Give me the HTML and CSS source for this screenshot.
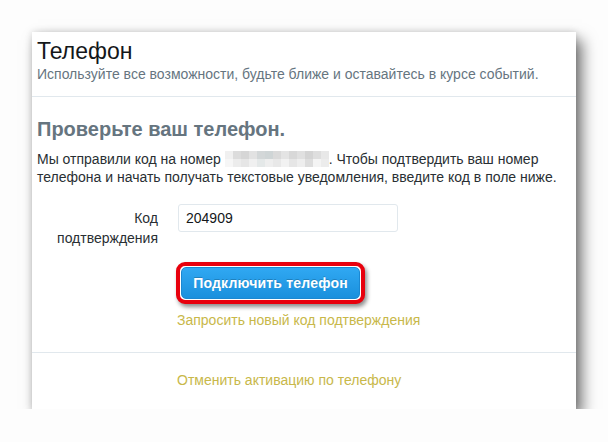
FILE: index.html
```html
<!DOCTYPE html>
<html lang="ru">
<head>
<meta charset="utf-8">
<title>Телефон</title>
<link rel="stylesheet" href="styles.css">
</head>
<body>
<div class="card">
  <div class="card-header">
    <h2 class="title">Телефон</h2>
    <p class="subtitle">Используйте все возможности, будьте ближе и оставайтесь в курсе событий.</p>
  </div>
  <div class="card-body">
    <h3 class="heading">Проверьте ваш телефон.</h3>
    <p class="text">Мы отправили код на номер <span class="blur"></span>. Чтобы подтвердить ваш номер<br>телефона и начать получать текстовые уведомления, введите код в поле ниже.</p>
    <div class="form-row">
      <label class="label" for="code">Код<br>подтверждения</label>
      <input class="input" id="code" type="text" value="204909">
    </div>
    <div class="actions">
      <div class="highlight">
        <button class="btn" type="button">Подключить телефон</button>
      </div>
      <a class="link" href="#">Запросить новый код подтверждения</a>
    </div>
  </div>
  <div class="card-footer">
    <a class="link" href="#">Отменить активацию по телефону</a>
  </div>
</div>
</body>
</html>
```
FILE: styles.css
```css
* { box-sizing: border-box; }
html, body { margin: 0; padding: 0; }
body {
  background: #fdfdfd;
  font-family: "Liberation Sans", Arial, sans-serif;
  color: #292f33;
  padding: 32px 0 0 32px;
}
.card {
  width: 544px;
  background: #fff;
  box-shadow: 6px 8px 14px rgba(0,0,0,0.55), 0 0 7px rgba(0,0,0,0.14);
}
.card-header {
  padding: 5px 5px 13px;
  border-bottom: 1px solid #e1e8ed;
}
.title {
  margin: 0;
  font-size: 23px;
  line-height: 28px;
  font-weight: normal;
  color: #14171a;
}
.subtitle {
  margin: 0;
  font-size: 14px;
  line-height: 18px;
  color: #66757f;
}
.card-body {
  padding: 20px 5px 23px;
  border-bottom: 1px solid #e1e8ed;
}
.heading {
  margin: 0;
  font-size: 20px;
  line-height: 24px;
  font-weight: bold;
  color: #66757f;
}
.text {
  margin: 9px 0 0;
  font-size: 14px;
  line-height: 18px;
  color: #292f33;
}
.blur {
  display: inline-block;
  width: 104px;
  height: 16px;
  vertical-align: -3px;
  background:
    linear-gradient(to right, #f0f0f0 0 8px, #dcdcdc 8px 16px, #d6d6d6 16px 24px, #e2e2e2 24px 32px, #d3d7d8 32px 40px, #cfd5d6 40px 48px, #dadada 48px 56px, #e4e4e4 56px 64px, #d8d8d8 64px 72px, #e0e0e0 72px 80px, #d4d4d4 80px 88px, #dedede 88px 96px, #e8e8e8 96px 104px) top / 100% 8px no-repeat,
    linear-gradient(to right, #f6f6f6 0 8px, #ececec 8px 16px, #e6e6e6 16px 24px, #f0f0f0 24px 32px, #e4e8e8 32px 40px, #eeeeee 40px 48px, #e8e8e8 48px 56px, #f2f2f2 56px 64px, #e6e6e6 64px 72px, #eeeeee 72px 80px, #dddddd 80px 88px, #f4f4f4 88px 96px, #ececec 96px 104px) bottom / 100% 8px no-repeat;
}
.form-row {
  display: flex;
  gap: 20px;
  margin-top: 18px;
}
.label {
  width: 121px;
  text-align: right;
  font-size: 14px;
  line-height: 20px;
  padding-top: 4px;
  color: #292f33;
}
.input {
  width: 220px;
  height: 28px;
  border: 1px solid #e1e8ed;
  border-radius: 3px;
  padding: 0 7px;
  font-family: inherit;
  font-size: 14px;
  color: #14171a;
  background: #fff;
  outline: none;
}
.actions {
  display: flex;
  flex-direction: column;
  align-items: flex-start;
  padding-left: 140px;
  margin-top: 14px;
}
.highlight {
  margin-left: -1px;
  border: 4px solid #e8000d;
  border-radius: 9px;
  padding: 1px;
  background: #fff;
  box-shadow: 2px 3px 4px rgba(0,0,0,0.45);
}
.btn {
  display: block;
  width: 179px;
  height: 32px;
  border: 1px solid #1b88d2;
  border-radius: 5px;
  background: linear-gradient(#30a8f2, #1a90dd);
  color: #fff;
  font-family: inherit;
  font-size: 14px;
  font-weight: bold;
  letter-spacing: 0.2px;
  text-shadow: 0 -1px 0 rgba(0,0,0,0.2);
  padding: 0;
}
.link {
  margin-top: 7px;
  font-size: 14px;
  line-height: 18px;
  color: #c8b84a;
  text-decoration: none;
}
.card-footer {
  padding: 18px 5px 20px 145px;
}
.card-footer .link { margin: 0; display: block; }
```
